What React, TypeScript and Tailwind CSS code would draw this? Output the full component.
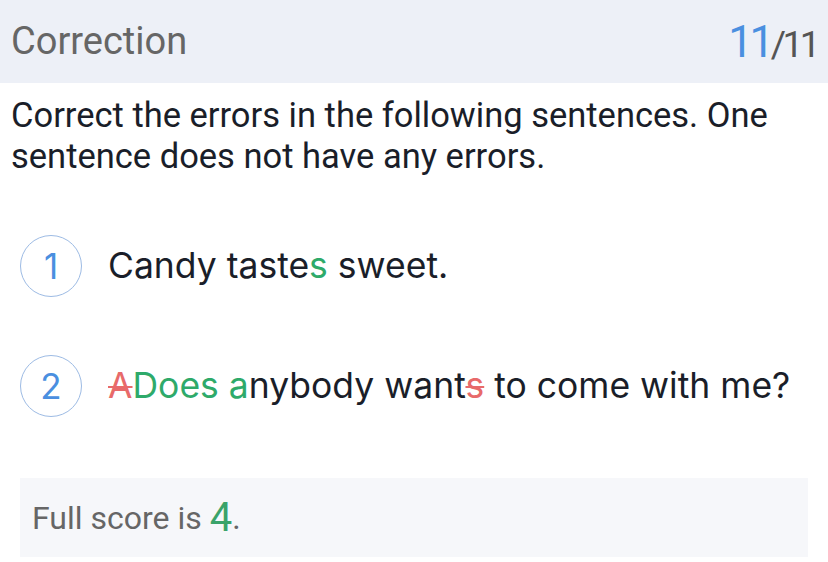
const roboto = { fontFamily: "Roboto, 'Liberation Sans', sans-serif" };
const inter = { fontFamily: "Inter, 'Liberation Sans', sans-serif" };

function Num({ n }: { n: number }) {
  return (
    <div
      className="flex h-[62px] w-[62px] shrink-0 items-center justify-center rounded-full border-[1.5px] border-[#9dbbe4] text-[35px] text-[#4a8fe0]"
      style={inter}
    >
      {n}
    </div>
  );
}

export default function App() {
  return (
    <div className="h-[562px] w-[828px] overflow-hidden bg-white">
      <div
        className="flex h-[83px] items-center justify-between bg-[#edf0f7] pl-[11px] pr-[11px]"
        style={roboto}
      >
        <span className="text-[38px] text-[#666666]">Correction</span>
        <span className="flex items-baseline text-[37px] tracking-[-3.5px] text-[#555555]">
          <span className="text-[44px] text-[#4a8fe0]">11</span>/11
        </span>
      </div>

      <p
        className="mt-[12px] px-[11px] text-[34.5px] leading-[41px] text-[#1a1e29]"
        style={roboto}
      >
        Correct the errors in the following sentences. One sentence does not have any errors.
      </p>

      <div className="mt-[58px] flex flex-col gap-[58px] pl-[20px] text-[#1a1e29]" style={inter}>
        <div className="flex items-center gap-[26px]">
          <Num n={1} />
          <span className="text-[35.5px]">
            Candy taste<span className="text-[#2eaa6a]">s</span> sweet.
          </span>
        </div>
        <div className="flex items-center gap-[26px]">
          <Num n={2} />
          <span className="text-[35.5px]">
            <span className="text-[#e86a6a] line-through decoration-2">A</span>
            <span className="text-[#2eaa6a]">Does a</span>nybody want
            <span className="text-[#e86a6a] line-through decoration-2">s</span> to come with me?
          </span>
        </div>
      </div>

      <div
        className="mx-[20px] mt-[61px] flex h-[79px] items-center bg-[#f6f7fa] px-[12px] text-[32px] text-[#666666]"
        style={roboto}
      >
        Full score is&nbsp;<span className="text-[40px] text-[#3aa36a]">4</span>.
      </div>
    </div>
  );
}
